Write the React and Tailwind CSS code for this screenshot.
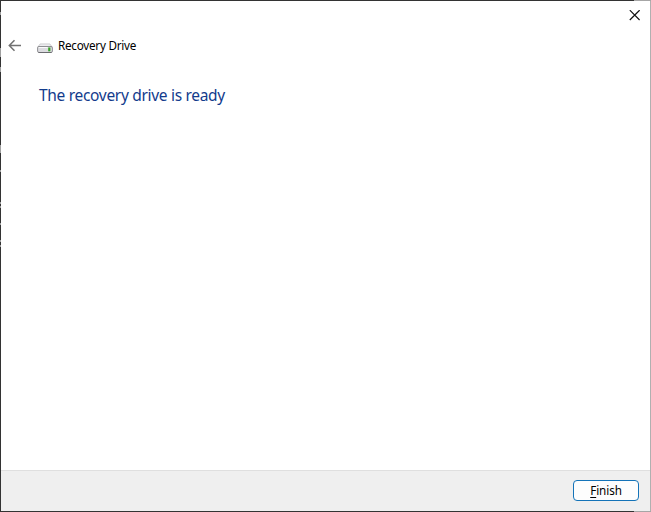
const edgeMarks = [
  { top: 12, height: 3 },
  { top: 48, height: 9 },
  { top: 67, height: 5 },
  { top: 145, height: 8 },
  { top: 170, height: 2 },
  { top: 202, height: 2 },
  { top: 206, height: 2 },
  { top: 223, height: 2 },
  { top: 240, height: 2 },
  { top: 245, height: 2 },
];

function BackArrow() {
  return (
    <svg width="14" height="14" viewBox="0 0 14 14" fill="none" stroke="#717171" strokeWidth="1.5" className="shrink-0">
      <path d="M13 6.5H1.5M6.5 1.2L1.3 6.5l5.2 5.3" />
    </svg>
  );
}

function DriveIcon() {
  return (
    <svg width="16" height="12" viewBox="0 0 16 12" className="shrink-0">
      <path d="M3.2 .9h9.6L15.2 4H.8z" fill="#ececee" stroke="#b4b4b7" strokeWidth=".6" />
      <rect x=".6" y="3.5" width="14.8" height="6" rx="1.4" fill="#dcdce0" stroke="#858589" strokeWidth=".9" />
      <path d="M1.6 4.5h9" stroke="#fafafa" />
      <path d="M1.5 9.5h13" stroke="#68686c" strokeWidth=".9" />
      <rect x="11.2" y="4.5" width="2.2" height="3.8" fill="#36a326" />
    </svg>
  );
}

export default function App() {
  return (
    <div className="relative flex h-[512px] w-[651px] flex-col bg-[#333333] font-['Noto_Sans','Open_Sans',sans-serif] text-black">
      <div className="flex h-px shrink-0"><div className="w-[634px]" /><div className="flex-1 bg-[#a6a6a6]" /></div>
      <div className="flex min-h-0 flex-1 border-r border-[#b0b0b0] pl-px">
        <main className="flex flex-1 flex-col bg-white">
          <header className="flex h-[30px] shrink-0 justify-end pt-[9px] pr-[10px]">
            <button aria-label="Close" className="h-[11px] w-[11px]">
              <svg width="11" height="11" viewBox="0 0 11 11" fill="none" stroke="#111111" strokeWidth="1.2"><path d="M.8.2l9.8 9.8m0-9.8L.8 10" /></svg>
            </button>
          </header>
          <div className="flex h-[30px] shrink-0 items-center pl-[7px]">
            <button aria-label="Back" className="h-[14px]"><BackArrow /></button>
            <div className="mt-[6px] ml-[15px]"><DriveIcon /></div>
            <span className="mb-[2px] ml-[5px] text-[11.7px] leading-4 tracking-[-0.25px] whitespace-nowrap">Recovery Drive</span>
          </div>
          <section className="flex-1 pt-[22px] pl-[38px]">
            <h1 className="text-[15.5px] leading-6 tracking-[-0.31px] whitespace-nowrap text-[#123b8c]">The recovery drive is ready</h1>
          </section>
          <footer className="flex h-[41px] shrink-0 justify-end border-t border-[#dfdfdf] bg-[#efefef] pt-[9px] pr-[11px]">
            <button className="flex h-[21px] w-[66px] items-center justify-center rounded-[4px] border border-[#1473b8] bg-[#fdfdfd] pb-[2px] text-[11.7px] leading-4 tracking-[-0.1px]">
              <span className="whitespace-nowrap"><span className="underline underline-offset-2">F</span>inish</span>
            </button>
          </footer>
        </main>
      </div>
      <div className="flex h-px shrink-0"><div className="w-[634px]" /><div className="flex-1 bg-[#a6a6a6]" /></div>
      {edgeMarks.map((m) => (
        <div key={m.top} className="absolute left-0 w-px bg-[#a0a0a0]" style={{ top: m.top, height: m.height }} />
      ))}
    </div>
  );
}
